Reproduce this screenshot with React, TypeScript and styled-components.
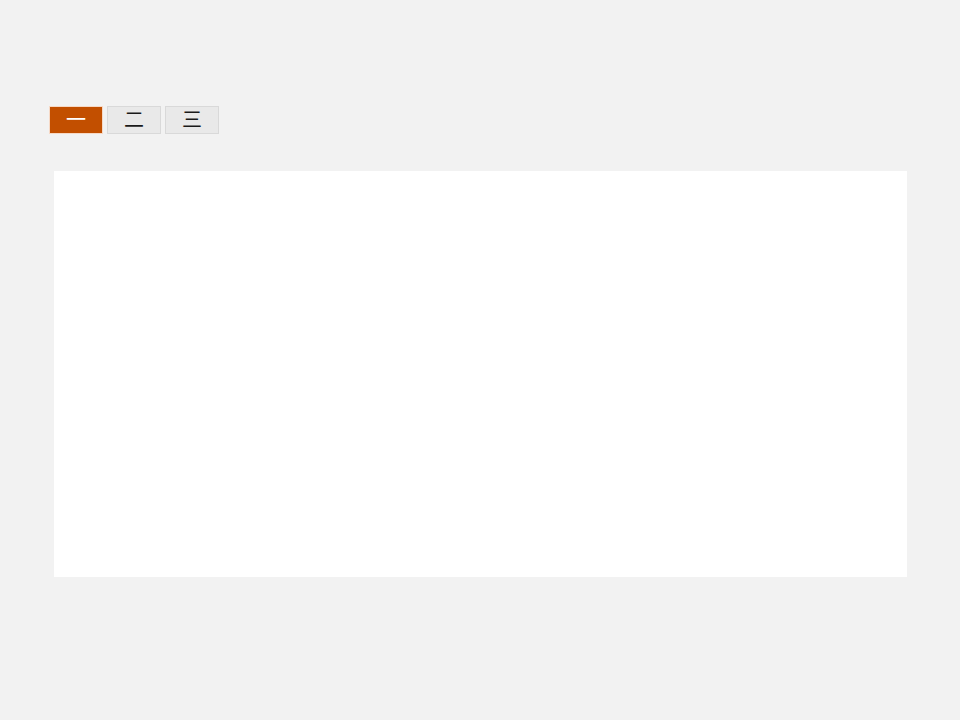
import React, { useState } from "react";
import styled, { createGlobalStyle } from "styled-components";

const Global = createGlobalStyle`
  html, body { margin: 0; padding: 0; background: #f2f2f2; }
  body { font-family: "Noto Sans CJK SC", "Noto Sans", sans-serif; }
`;

const Page = styled.div`
  padding: 106px 0 0 49px;
  min-height: 720px;
  box-sizing: border-box;
`;

const TabBar = styled.div`
  display: flex;
  gap: 4px;
`;

const Tab = styled.button<{ $active: boolean }>`
  width: 54px;
  height: 28px;
  box-sizing: border-box;
  margin: 0;
  padding: 0 0 3px;
  border: 1px solid ${(p) => (p.$active ? "#f6d9c6" : "#d9d9d9")};
  background: ${(p) => (p.$active ? "#c24f00" : "#e9e9e9")};
  color: ${(p) => (p.$active ? "#ffffff" : "#1a1a1a")};
  font-family: "Noto Sans CJK SC", sans-serif;
  font-size: 20px;
  line-height: 21px;
  cursor: pointer;
  display: flex;
  align-items: center;
  justify-content: center;
`;

const Panel = styled.div`
  margin: 37px 0 0 5px;
  width: 853px;
  height: 406px;
  background: #ffffff;
`;

export default function App() {
  const [active, setActive] = useState(0);
  const tabs = ["一", "二", "三"];
  return (
    <>
      <Global />
      <Page>
        <TabBar>
          {tabs.map((t, i) => (
            <Tab key={t} $active={i === active} onClick={() => setActive(i)}>
              {t}
            </Tab>
          ))}
        </TabBar>
        <Panel />
      </Page>
    </>
  );
}
